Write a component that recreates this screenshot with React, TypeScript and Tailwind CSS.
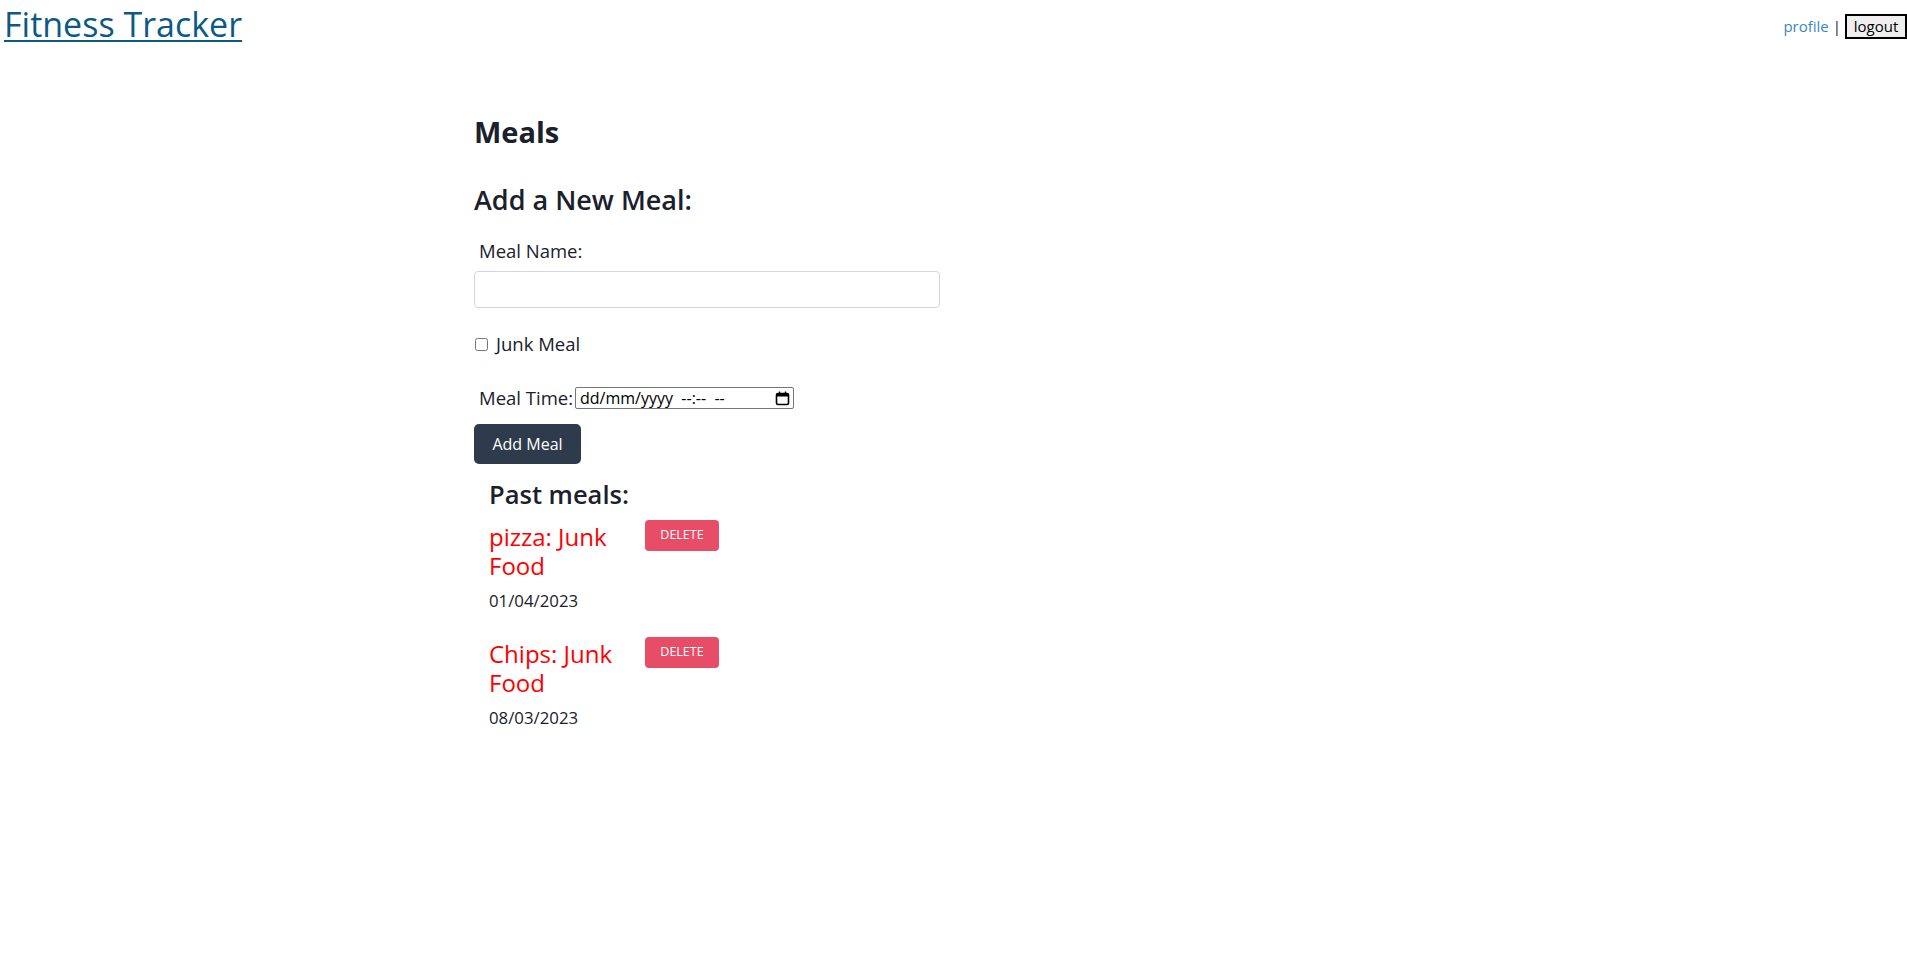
import React from "react";

const F = { fontFamily: '"Open Sans", "Noto Sans", Arial, sans-serif' };

function CalendarIcon() {
  return (
    <svg width="15" height="15" viewBox="0 0 15 15" fill="none">
      <rect x="1.5" y="2.5" width="12" height="11" rx="1.5" stroke="#000" strokeWidth="1.6" />
      <rect x="1.5" y="2.5" width="12" height="3" fill="#000" />
      <line x1="4.5" y1="0.5" x2="4.5" y2="3" stroke="#000" strokeWidth="1.4" />
      <line x1="10.5" y1="0.5" x2="10.5" y2="3" stroke="#000" strokeWidth="1.4" />
    </svg>
  );
}

function MealItem({ name, date }: { name: string; date: string }) {
  return (
    <div className="mb-[24px]">
      <div className="flex items-start w-[230px] justify-between">
        <div className="w-[140px] text-[24px] leading-[29px] text-[#ff0000] mt-[2px]">{name}: Junk Food</div>
        <button className="h-[31px] w-[74px] rounded-[4px] bg-[#e84d68] text-white text-[12.5px] leading-none">
          DELETE
        </button>
      </div>
      <div className="text-[16.8px] leading-[24px] mt-[9px] text-[#1a202c]">{date}</div>
    </div>
  );
}

export default function App() {
  return (
    <div className="min-h-[955px] bg-white text-[#1a202c]" style={F}>
      <header className="flex justify-between items-start">
        <a href="#" className="ml-[4px] mt-[3px] text-[34px] leading-[42px] text-[#0b5a85] underline decoration-[2px] underline-offset-[3px]">
          Fitness Tracker
        </a>
        <div className="flex items-center mt-[14px] text-[15px]">
          <a href="#" className="text-[#3a87c4]">profile</a>
          <span className="mx-[4px] text-[#1a202c]">|</span>
          <button className="h-[25px] w-[62px] border-2 border-black bg-[#efefef] text-black text-[15px] leading-none">
            logout
          </button>
        </div>
      </header>

      <main className="ml-[474px] w-[466px] pt-[69px]">
        <h1 className="text-[29px] font-bold leading-[36px]">Meals</h1>
        <h2 className="mt-[34px] text-[27px] font-semibold leading-[32px]">Add a New Meal:</h2>
        <div className="mt-[22px]">
          <label className="block ml-[5px] text-[18.5px] leading-[26px]">Meal Name:</label>
          <input
            type="text"
            className="mt-[7px] block w-[466px] h-[37px] rounded-[4px] border border-[#d2d6dc] outline-none px-3"
          />
        </div>
        <label className="mt-[23px] flex items-center text-[18.5px] leading-[26px]">
          <input type="checkbox" className="w-[13px] h-[13px] m-0 ml-[1px]" />
          <span className="ml-[8px]">Junk Meal</span>
        </label>
        <div className="mt-[28px] flex items-center">
          <span className="ml-[5px] text-[18.5px] leading-[26px]">Meal Time:</span>
          <div className="ml-[2px] w-[219px] h-[22px] border border-[#767676] rounded-[2px] flex items-center justify-between pl-[4px] pr-[3px] text-[16px] leading-none text-black">
            <span className="whitespace-pre">dd/mm/yyyy  --:--  --</span>
            <CalendarIcon />
          </div>
        </div>
        <button className="mt-[13px] h-[40px] w-[107px] rounded-[5px] bg-[#2d3b4c] text-white text-[16px]">
          Add Meal
        </button>
        <div className="ml-[15px] mt-[14px]">
          <h3 className="text-[25.5px] font-semibold leading-[32px]">Past meals:</h3>
          <div className="mt-[10px]">
            <MealItem name="pizza" date="01/04/2023" />
            <MealItem name="Chips" date="08/03/2023" />
          </div>
        </div>
      </main>
    </div>
  );
}
